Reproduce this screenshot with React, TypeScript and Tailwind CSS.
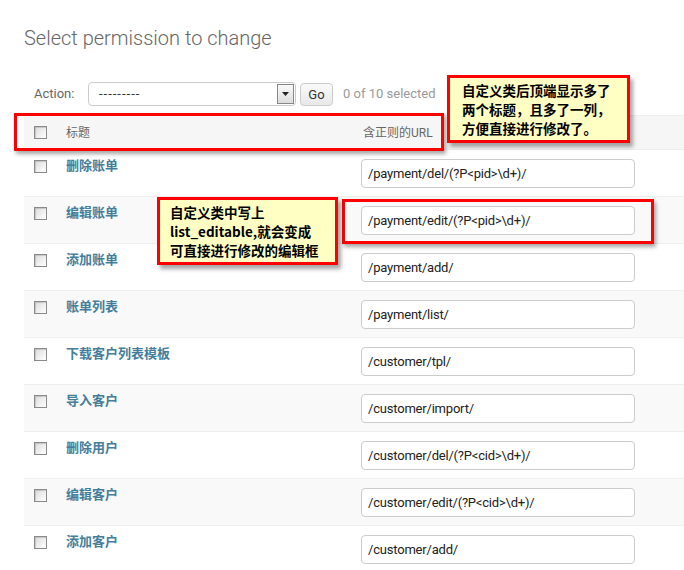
import React from 'react';

const rows = [
  { name: '删除账单', url: '/payment/del/(?P<pid>\\d+)/' },
  { name: '编辑账单', url: '/payment/edit/(?P<pid>\\d+)/' },
  { name: '添加账单', url: '/payment/add/' },
  { name: '账单列表', url: '/payment/list/' },
  { name: '下载客户列表模板', url: '/customer/tpl/' },
  { name: '导入客户', url: '/customer/import/' },
  { name: '删除用户', url: '/customer/del/(?P<cid>\\d+)/' },
  { name: '编辑客户', url: '/customer/edit/(?P<cid>\\d+)/' },
  { name: '添加客户', url: '/customer/add/' },
];

const cjk = "font-['Roboto','Noto_Sans_CJK_SC',sans-serif]";

function Checkbox() {
  return (
    <div className="w-[13px] h-[13px] border border-[#8a8a8a] bg-gradient-to-br from-[#dcdcdc] to-white shadow-[inset_1px_1px_1px_rgba(0,0,0,0.15)]" />
  );
}

function Note({ lines, className }: { lines: string[]; className: string }) {
  return (
    <div className={`absolute border-[3px] border-[#ff0000] bg-[#ffffc4] shadow-[3px_4px_4px_rgba(0,0,0,0.35)] text-[13.5px] leading-[19px] font-bold text-black font-['Noto_Sans_CJK_SC',sans-serif] ${className}`}>
      {lines.map((l, i) => <div key={i} className="whitespace-nowrap">{l}</div>)}
    </div>
  );
}

export default function App() {
  return (
    <div className={`relative w-[684px] h-[570px] overflow-hidden bg-white ${cjk}`}>
      <div className="pl-6 pt-[25px]">
        <h1 className="text-[20px] leading-[26px] font-light text-[#666]">Select permission to change</h1>

        {/* actions */}
        <div className="mt-[31px] flex items-center h-[24px] pl-[10px]">
          <span className="text-[13px] text-[#666] w-[54px]">Action:</span>
          <div className="relative w-[208px] h-[24px] border border-[#ccc] rounded-[4px] bg-white flex items-center pl-[10px] text-[13px] text-[#333] tracking-[1px]">
            ---------
            <div className="absolute right-[1px] top-[1px] w-[17px] h-[20px] border border-[#888] bg-gradient-to-b from-[#fafafa] to-[#ddd] flex items-center justify-center">
              <svg width="7" height="4" viewBox="0 0 7 4"><path d="M0 0h7L3.5 4z" fill="#222" /></svg>
            </div>
          </div>
          <button className="ml-[4px] w-[33px] h-[23px] mt-[1px] border border-[#ccc] rounded-[4px] bg-gradient-to-b from-[#fafafa] to-[#e8e8e8] text-[13px] text-[#333]">Go</button>
          <span className="ml-[10px] text-[13px] text-[#999]">0 of 10 selected</span>
        </div>

        {/* table */}
        <div className="mt-[9px] w-[660px]">
          <div className="h-[35px] flex items-center bg-[#f6f6f6] border-t border-b border-[#eee] text-[12px] text-[#666]">
            <div className="w-[42px] pl-[10px]"><Checkbox /></div>
            <div className="w-[295px]">标题</div>
            <div className="pl-[2px]">含正则的URL</div>
          </div>
          {rows.map((r, i) => (
            <div key={i} className={`h-[47px] flex border-b border-[#eee] ${i % 2 === 1 ? 'bg-[#f9f9f9]' : 'bg-white'}`}>
              <div className="w-[42px] pl-[10px] pt-[10px]"><Checkbox /></div>
              <div className="w-[295px] pt-[8px] text-[13px] leading-[16px] font-bold text-[#447e9b]">{r.name}</div>
              <div className="pt-[9px]">
                <div className="w-[274px] h-[29px] border border-[#ccc] rounded-[4px] bg-white flex items-center pl-[6px] text-[13px] tracking-[-0.2px] text-[#222]">
                  {r.url}
                </div>
              </div>
            </div>
          ))}
        </div>
      </div>

      {/* annotations */}
      <div className="absolute left-[14px] top-[113px] w-[430px] h-[38px] border-[3px] border-[#ff0000] shadow-[2px_3px_4px_rgba(0,0,0,0.35)]" />
      <div className="absolute left-[342px] top-[199px] w-[312px] h-[45px] border-[3px] border-[#ff0000] shadow-[2px_3px_4px_rgba(0,0,0,0.35)]" />
      <Note
        className="left-[447px] top-[75px] w-[183px] h-[68px] pl-[12px] pt-[3px]"
        lines={['自定义类后顶端显示多了', '两个标题，且多了一列，', '方便直接进行修改了。']}
      />
      <Note
        className="left-[157px] top-[197px] w-[181px] h-[68px] pl-[10px] pt-[3px]"
        lines={['自定义类中写上', 'list_editable,就会变成', '可直接进行修改的编辑框']}
      />
    </div>
  );
}
